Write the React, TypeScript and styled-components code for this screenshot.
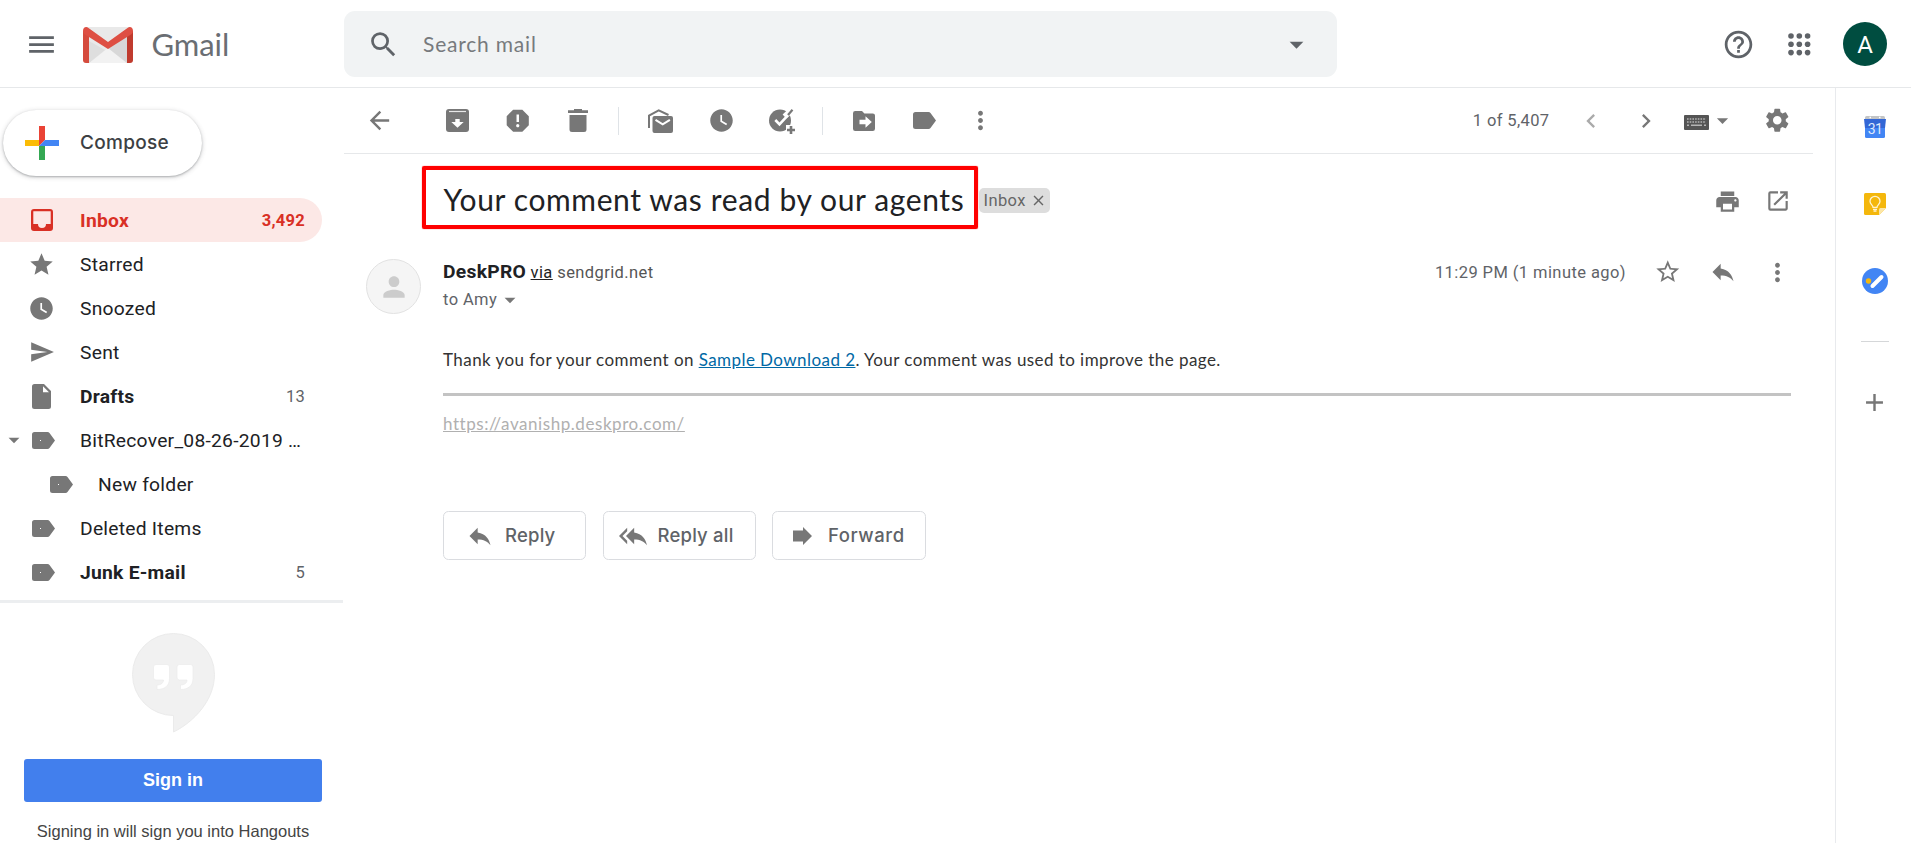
import React from "react";
import styled, { createGlobalStyle } from "styled-components";
import {
  MdMenu, MdSearch, MdArrowDropDown, MdHelpOutline, MdArrowBack, MdReport, MdWatchLater, MdChevronLeft,
  MdChevronRight, MdSettings, MdPrint, MdOpenInNew, MdStarBorder, MdStar, MdSend, MdReply, MdReplyAll,
  MdAdd, MdClose, MdPerson, MdMoreVert,
} from "react-icons/md";

const Global = createGlobalStyle`
  * { box-sizing: border-box; }
  body { margin: 0; background: #fff; font-family: Roboto, sans-serif; color: #202124; overflow: hidden; }
  svg { display: block; flex: none; }
`;

const grey = "#777";
const dark = "#5f6368";

/* ---------- frame ---------- */

const Page = styled.div`
  display: flex;
  flex-direction: column;
  width: 1911px;
  height: 843px;
`;
const Header = styled.header`
  display: flex;
  align-items: center;
  height: 88px;
  padding: 1px 24px 0 0;
  border-bottom: 1px solid #e6e8ea;
  color: ${dark};
`;
const Body = styled.div`
  display: flex;
  flex: 1;
  min-height: 0;
`;
const Slot = styled.span<{ $w: number; $tone?: string }>`
  display: flex;
  align-items: center;
  justify-content: center;
  flex: none;
  width: ${(p) => p.$w}px;
  color: ${(p) => p.$tone ?? "inherit"};
`;
const Spacer = styled.div`
  flex: 1;
`;

/* ---------- header ---------- */

const Brand = styled.div`
  display: flex;
  align-items: center;
  width: 344px;
  padding-left: 25px;
  padding-top: 1px;
`;
const BrandLogo = styled.div`
  margin: 0 18.5px 0 25px;
`;
const BrandName = styled.span`
  padding-bottom: 2px;
  font: 400 31px/40px Lato, sans-serif;
  letter-spacing: -0.06px;
  color: #6a6e73;
`;
const Search = styled.div`
  display: flex;
  align-items: center;
  width: 993px;
  height: 66px;
  padding: 0 24px 0 23px;
  border-radius: 11px;
  background: #f1f3f4;
`;
const Placeholder = styled.span`
  flex: 1;
  margin-left: 23px;
  font: 400 21px/30px Lato, sans-serif;
  letter-spacing: 0.8px;
  color: #777a7d;
`;
const Account = styled.div`
  display: flex;
  align-items: center;
  justify-content: center;
  width: 44px;
  height: 44px;
  margin-left: 13px;
  border-radius: 50%;
  background: #004d40;
  color: #fff;
  font-size: 24px;
  line-height: 44px;
  padding-top: 2px;
`;

/* ---------- sidebar ---------- */

const Sidebar = styled.aside`
  display: flex;
  flex-direction: column;
  width: 344px;
  padding-top: 22px;
`;
const Compose = styled.div`
  display: flex;
  align-items: center;
  flex: none;
  width: 199px;
  height: 66px;
  margin: 0 0 22px 3px;
  padding-left: 22px;
  border-radius: 33px;
  box-shadow: 0 1px 2px rgba(60, 64, 67, 0.32), 0 1px 4px 1px rgba(60, 64, 67, 0.16);
`;
const ComposeLabel = styled.span`
  margin-left: 21px;
  font: 500 19px/26px Inter, sans-serif;
  letter-spacing: 0.3px;
  color: #3c4043;
`;
const Nav = styled.nav`
  flex: none;
  width: 343px;
  padding-bottom: 6px;
  border-bottom: 3px solid #eceef0;
`;
const NavRow = styled.div<{ $active?: boolean; $strong?: boolean; $indent?: boolean }>`
  display: flex;
  align-items: center;
  width: 322px;
  height: 44px;
  padding: 0 17px 0 ${(p) => (p.$indent ? 18 : 0)}px;
  border-radius: 0 22px 22px 0;
  background: ${(p) => (p.$active ? "#fce8e6" : "transparent")};
  color: ${(p) => (p.$active ? "#d93025" : "#202124")};
  font-size: 19.25px;
  font-weight: ${(p) => (p.$active || p.$strong ? 700 : 400)};
  letter-spacing: 0.25px;
  white-space: nowrap;
`;
const NavLabel = styled.span`
  flex: 1;
  margin-left: 22px;
`;
const Count = styled.span<{ $active?: boolean }>`
  font-size: 16.5px;
  font-weight: ${(p) => (p.$active ? 700 : 400)};
  color: ${(p) => (p.$active ? "#d93025" : dark)};
`;
const Hangouts = styled.section`
  display: flex;
  flex-direction: column;
  align-items: center;
  width: 346px;
  padding-top: 30px;
  font-family: "Liberation Sans", sans-serif;
`;
const SignIn = styled.div`
  width: 298px;
  height: 43px;
  margin: 26px 0 17px;
  border-radius: 3px;
  background: #427fed;
  color: #fff;
  font-size: 18px;
  font-weight: 700;
  line-height: 42px;
  text-align: center;
`;
const Hint = styled.div`
  color: #444;
  font-size: 16.5px;
  line-height: 24px;
`;

/* ---------- message pane ---------- */

const Main = styled.main`
  width: 1469px;
`;
const Toolbar = styled.div`
  display: flex;
  align-items: center;
  height: 66px;
  border-bottom: 1px solid #e6e8ea;
  color: ${grey};
`;
const Rule = styled.span<{ $before: number; $after: number }>`
  width: 1px;
  height: 28px;
  margin: 0 ${(p) => p.$after}px 0 ${(p) => p.$before}px;
  background: #dfe3e7;
`;
const ActionGroup = styled.div`
  display: flex;
  align-items: center;
  margin-left: 11.5px;
`;
const Pager = styled.span`
  margin-right: 14px;
  font-size: 16.5px;
  letter-spacing: 0.37px;
  color: ${dark};
`;
const InputTools = styled.div`
  display: flex;
  align-items: center;
  margin: 0 6px 0 10.5px;
`;
const KeyboardKey = styled.span`
  padding-top: 4px;
`;
const SubjectRow = styled.div`
  display: flex;
  align-items: flex-start;
  height: 104px;
  padding: 12px 8px 0 78px;
`;
const Subject = styled.h2`
  width: 555.5px;
  height: 63px;
  margin: 0;
  padding: 3px 0 0 17.5px;
  border: 4px solid #f00;
  border-radius: 2px;
  box-shadow: 0 0 1px #f00;
  font: 400 30px/53px Lato, sans-serif;
  letter-spacing: 0.62px;
  white-space: nowrap;
`;
const Chip = styled.span`
  display: flex;
  align-items: center;
  justify-content: space-between;
  width: 71px;
  height: 25px;
  margin: 22px 0 0 1.5px;
  padding: 0 3px 0 4.5px;
  border-radius: 5px;
  background: #ddd;
  color: #666;
  font-size: 16.5px;
  letter-spacing: 0.4px;
`;
const SubjectTools = styled.div`
  display: flex;
  align-items: center;
  height: 70px;
  color: ${grey};
`;
const Message = styled.article`
  display: flex;
  padding-left: 22px;
`;
const Avatar = styled.div`
  display: flex;
  align-items: center;
  justify-content: center;
  flex: none;
  width: 55px;
  height: 55px;
  margin: 1px 22px 0 0;
  border: 1px solid #e2e2e2;
  border-radius: 50%;
  background: #f5f5f5;
  color: #ccc;
`;
const Content = styled.div`
  width: 1370px;
`;
const FromLine = styled.div`
  display: flex;
  align-items: center;
  height: 28px;
  color: ${grey};
`;
const Sender = styled.div`
  flex: 1;
  font-size: 16.5px;
  letter-spacing: 0.4px;
  line-height: 28px;
  color: #555;
`;
const SenderName = styled.strong`
  margin-right: 4.5px;
  font-size: 19.25px;
  letter-spacing: 0.28px;
  color: #202124;
`;
const Via = styled.span`
  margin-right: 4.5px;
  color: #222;
  text-decoration: underline;
`;
const Time = styled.span`
  font-size: 16.5px;
  letter-spacing: 0.42px;
  margin-right: 15px;
  color: ${dark};
`;
const ToLine = styled.div`
  display: flex;
  align-items: center;
  height: 27px;
  font-size: 16.5px;
  letter-spacing: 0.4px;
  color: ${dark};
`;
const Text = styled.p`
  margin: 35px 0 0;
  font: 400 17px/24px Lato, sans-serif;
  letter-spacing: 0.435px;
  color: #333;
`;
const TextLink = styled.a`
  color: #0068a5;
  text-decoration: underline;
`;
const Divider = styled.div`
  width: 1348px;
  height: 3px;
  margin-top: 21px;
  background: #c3c3c3;
`;
const SiteLink = styled.a`
  display: block;
  width: max-content;
  margin-top: 16px;
  font: 400 17px/24px Lato, sans-serif;
  letter-spacing: 0.56px;
  color: #b0b0b0;
  text-decoration: underline;
`;
const Buttons = styled.div`
  display: flex;
  gap: 16.5px;
  margin-top: 75px;
`;
const ReplyButton = styled.div<{ $w: number; $pad: number; $gap: number; $ls: number }>`
  display: flex;
  align-items: center;
  gap: ${(p) => p.$gap}px;
  width: ${(p) => p.$w}px;
  height: 49px;
  padding-left: ${(p) => p.$pad}px;
  border: 1px solid #dadce0;
  border-radius: 5.5px;
  font: 500 18.5px/24px Inter, sans-serif;
  letter-spacing: ${(p) => p.$ls}px;
  color: ${dark};
  svg { color: ${grey}; }
`;
const ReplyLabel = styled.span`
  padding-bottom: 2px;
`;

/* ---------- side panel ---------- */

const Panel = styled.aside`
  display: flex;
  flex-direction: column;
  align-items: center;
  width: 76px;
  margin-left: 22px;
  padding: 28px 0 0 2px;
  border-left: 1px solid #e8eaed;
  color: ${grey};
`;
const AppIcon = styled.div<{ $gap: number }>`
  margin-bottom: ${(p) => p.$gap}px;
`;
const PanelRule = styled.div`
  width: 28px;
  height: 1px;
  margin-bottom: 46px;
  background: #d5d7d9;
`;

/* ---------- drawings ---------- */

const GmailLogo = () => (
  <svg width="50" height="36" viewBox="0 0 50 36">
    <path d="M3 0h44v36H3z" fill="#e9e9e9" />
    <path d="M6 36L25 21l19 15z" fill="#f2f2f2" />
    <path d="M6 14l16 9L6 36z" fill="#dedede" />
    <path d="M25 21L44 9v27z" fill="#d8d8d8" />
    <path d="M0 3.500l6 5V36H3a3 3 0 0 1-3-3z" fill="#d54b3d" />
    <path d="M50 3.500l-6 5V36h3a3 3 0 0 0 3-3z" fill="#c03b2e" />
    <path d="M0 4C0 .5 3 -1 5.500 1L25 15 44.500 1C47 -1 50 .5 50 4c0 1.500-.8 2.600-2 3.500L25 22 2 7.500C.8 6.600 0 5.500 0 4z" fill="#de4f43" />
  </svg>
);
const AppsGrid = () => (
  <svg width="23" height="23" viewBox="0 0 23 23" fill={dark}>
    {[3, 11.3, 19.6].map((y) => [3, 11.3, 19.6].map((x) => <circle key={`${x}-${y}`} cx={x} cy={y} r="2.8" />))}
  </svg>
);
const ComposePlus = () => (
  <svg width="34" height="34" viewBox="0 0 34 34">
    <path d="M14 0h6v14l-6 6z" fill="#ea4335" />
    <path d="M0 14h14v6H0z" fill="#fbbc05" />
    <path d="M34 14H20l-6 6h20z" fill="#4285f4" />
    <path d="M14 20h6v14h-6z" fill="#34a853" />
  </svg>
);
const InboxIcon = () => (
  <svg width="22" height="22" viewBox="0 0 22 22">
    <path
      fill="currentColor"
      fillRule="evenodd"
      d="M3 0h16a3 3 0 0 1 3 3v16a3 3 0 0 1-3 3H3a3 3 0 0 1-3-3V3a3 3 0 0 1 3-3zM2.300 2.300V15H7a4 4 0 0 0 8 0h4.700V2.300z"
    />
  </svg>
);
const DraftIcon = () => (
  <svg width="19" height="25" viewBox="0 0 19 25">
    <path fill={grey} d="M2.500 0h9.500L19 7v15.500a2.500 2.500 0 0 1-2.500 2.500h-14A2.500 2.500 0 0 1 0 22.500v-20A2.500 2.500 0 0 1 2.500 0z" />
    <path fill="#fff" d="M11 2.300v6h6z" />
  </svg>
);
const TagIcon = ({ dot }: { dot?: boolean }) => (
  <svg width="23" height="17" viewBox="0 0 23 17">
    <path fill={grey} d="M2.500 0h13a2.500 2.500 0 0 1 2 1L23 8.500 17.500 16a2.500 2.500 0 0 1-2 1h-13A2.500 2.500 0 0 1 0 14.500v-12A2.500 2.500 0 0 1 2.500 0z" />
    {dot && <path fill="#fff" d="M8 8h1v1H8z" />}
  </svg>
);
const ArchiveIcon = () => (
  <svg width="23" height="23" viewBox="0 0 23 23">
    <rect width="23" height="23" rx="3" fill={grey} />
    <path d="M3 2.500h17" stroke="#e8e8e8" strokeWidth="1.200" />
    <path d="M9.300 10h4.400v3h4L11.500 18.800 5.300 13h4z" fill="#fff" />
  </svg>
);
const TrashIcon = () => (
  <svg width="20" height="23" viewBox="0 0 20 23" fill={grey}>
    <path d="M6 0h8v1.300h6V4H0V1.300h6zM1.500 6h17v14.500A2.500 2.500 0 0 1 16 23H4a2.500 2.500 0 0 1-2.500-2.500z" />
  </svg>
);
const UnreadIcon = () => (
  <svg width="25" height="24" viewBox="0 0 25 24">
    <path d="M1 19V6.500L10.700 1.300 20.500 6" fill="none" stroke={grey} strokeWidth="2" />
    <rect x="4.500" y="7" width="20.500" height="17" rx="2" fill={grey} />
    <path d="M7.500 10.800l7.200 4.600 7.200-4.600" fill="none" stroke="#fff" strokeWidth="2" />
  </svg>
);
const TaskIcon = () => (
  <svg width="27" height="26" viewBox="0 0 27 26">
    <circle cx="11" cy="12.500" r="11" fill={grey} />
    <path d="M15.500 8.500L23.500 1" fill="none" stroke="#fff" strokeWidth="5.500" />
    <path d="M18.800 7.200l4.700-5.400" fill="none" stroke={grey} strokeWidth="2.200" />
    <path d="M6.300 12l4.200 4.300L19 7.200" fill="none" stroke="#fff" strokeWidth="2.600" />
    <path d="M17 17h10v9H17z" fill="#fff" />
    <path d="M22 18v8M18 22h8" stroke={grey} strokeWidth="2.600" />
  </svg>
);
const MoveIcon = () => (
  <svg width="22" height="20" viewBox="0 0 22 20">
    <path fill={grey} d="M2.200 0H9l2.400 2.400h8.400A2.200 2.200 0 0 1 22 4.600v13.200a2.200 2.200 0 0 1-2.200 2.200H2.200A2.200 2.200 0 0 1 0 17.800V2.200A2.200 2.200 0 0 1 2.200 0z" />
    <path fill="#fff" d="M6.500 8.800h6V5.200l6.300 5.800-6.300 5.800v-3.600h-6z" />
  </svg>
);
const KeyboardIcon = () => (
  <svg width="25" height="15" viewBox="0 0 25 15">
    <rect width="25" height="15" rx="1" fill="#555" />
    <path d="M3 4h19M3 7h19" stroke="#b4b4b4" strokeWidth="1.600" strokeDasharray="1.600 1.100" />
    <path d="M3 10.300h2M20 10.300h2M7 10.300h11" stroke="#b4b4b4" strokeWidth="1.600" />
  </svg>
);
const ForwardIcon = () => (
  <svg width="19" height="18" viewBox="0 0 19 18">
    <path fill="currentColor" d="M0 3.500h10V0l9 9-9 9v-3.500H0z" />
  </svg>
);
const HangoutsLogo = () => (
  <svg width="83" height="100" viewBox="0 0 83 100">
    <path
      d="M41.500.5a41 41 0 1 0 0 82V99C62 89 82.500 67 82.500 41.500a41 41 0 0 0-41-41z"
      fill="#f1f1f1"
      stroke="#ebebeb"
    />
    <path
      fill="#fff"
      stroke="#ebebeb"
      strokeWidth=".7"
      d="M24 31.500h11a2.500 2.500 0 0 1 2.500 2.500v11.500c0 7-4.500 11-12.500 11V52c4 0 6.500-2 6.500-5H24a2.500 2.500 0 0 1-2.500-2.500V34a2.500 2.500 0 0 1 2.500-2.500zM47.500 31.500h11a2.500 2.500 0 0 1 2.500 2.500v11.500c0 7-4.500 11-12.500 11V52c4 0 6.500-2 6.500-5h-7.500a2.500 2.500 0 0 1-2.500-2.500V34a2.500 2.500 0 0 1 2.500-2.500z"
    />
  </svg>
);
const CalendarIcon = () => (
  <svg width="22" height="22" viewBox="0 0 22 22">
    <path d="M1 1.500Q1 0 2.500 0h17Q21 0 21 1.500V5H1z" fill="#c2c4c6" />
    <path d="M5.500 1.500h1.500M15 1.500h1.500" stroke="#fff" strokeWidth="1.400" />
    <path d="M0 3h22l-1 9H1z" fill="#3367d6" />
    <path d="M1 12h20v8.500q0 1.500-1.500 1.500h-17Q1 22 1 20.500z" fill="#4285f4" />
    <text x="11" y="17.800" textAnchor="middle" fontFamily="Roboto, sans-serif" fontSize="14" letterSpacing="-0.5" fill="#dfe9fc">31</text>
  </svg>
);
const KeepIcon = () => (
  <svg width="22" height="22" viewBox="0 0 22 22">
    <path d="M1.500 0h19Q22 0 22 1.500V15l-7 7H1.500Q0 22 0 20.500v-19Q0 0 1.500 0z" fill="#f4b70c" />
    <path d="M22 15l-7 7v-5.500q0-1.500 1.500-1.500z" fill="#fce6a6" />
    <path d="M9 14.300c0-2-3-3-3-6a5 5 0 0 1 10 0c0 3-3 4-3 6zM9 16.300h4M9.500 18h3" fill="none" stroke="#fff3d0" strokeWidth="1.300" />
  </svg>
);
const TasksIcon = () => (
  <svg width="26" height="26" viewBox="0 0 26 26">
    <circle cx="13" cy="13" r="13" fill="#4285f4" />
    <path d="M10.500 18L19.500 9" stroke="#fff" strokeWidth="4" strokeLinecap="round" />
    <circle cx="6.500" cy="13" r="2.700" fill="#f4b70c" />
  </svg>
);

type Item = {
  label: string;
  icon: React.ReactNode;
  shift?: boolean;
  count?: string;
  active?: boolean;
  strong?: boolean;
  indent?: boolean;
  open?: boolean;
};

const items: Item[] = [
  { label: "Inbox", icon: <InboxIcon />, count: "3,492", active: true },
  { label: "Starred", icon: <MdStar size={27} color={grey} /> },
  { label: "Snoozed", icon: <MdWatchLater size={27} color={grey} /> },
  { label: "Sent", icon: <MdSend size={26} color={grey} /> },
  { label: "Drafts", icon: <DraftIcon />, count: "13", strong: true },
  { label: "BitRecover_08-26-2019 …", icon: <TagIcon dot />, shift: true, open: true },
  { label: "New folder", icon: <TagIcon dot />, shift: true, indent: true },
  { label: "Deleted Items", icon: <TagIcon dot />, shift: true },
  { label: "Junk E-mail", icon: <TagIcon dot />, shift: true, count: "5", strong: true },
];

const NavIcon = styled.span<{ $shift?: boolean }>`
  display: flex;
  align-items: center;
  justify-content: center;
  width: 33px;
  padding-left: ${(p) => (p.$shift ? 4 : 0)}px;
`;
const Expander = styled.span`
  display: flex;
  justify-content: center;
  width: 25px;
  padding-left: 2px;
  color: ${grey};
`;

export default function App() {
  return (
    <>
      <Global />
      <Page>
        <Header>
          <Brand>
            <MdMenu size={33} />
            <BrandLogo><GmailLogo /></BrandLogo>
            <BrandName>Gmail</BrandName>
          </Brand>
          <Search>
            <MdSearch size={33} />
            <Placeholder>Search mail</Placeholder>
            <MdArrowDropDown size={33} />
          </Search>
          <Spacer />
          <Slot $w={61}><MdHelpOutline size={33} /></Slot>
          <Slot $w={61}><AppsGrid /></Slot>
          <Account>A</Account>
        </Header>

        <Body>
          <Sidebar>
            <Compose>
              <ComposePlus />
              <ComposeLabel>Compose</ComposeLabel>
            </Compose>
            <Nav>
              {items.map((it) => (
                <NavRow key={it.label} $active={it.active} $strong={it.strong} $indent={it.indent}>
                  <Expander>{it.open && <MdArrowDropDown size={26} />}</Expander>
                  <NavIcon $shift={it.shift}>{it.icon}</NavIcon>
                  <NavLabel>{it.label}</NavLabel>
                  {it.count && <Count $active={it.active}>{it.count}</Count>}
                </NavRow>
              ))}
            </Nav>
            <Hangouts>
              <HangoutsLogo />
              <SignIn>Sign in</SignIn>
              <Hint>Signing in will sign you into Hangouts</Hint>
            </Hangouts>
          </Sidebar>

          <Main>
            <Toolbar>
              <Slot $w={71}><MdArrowBack size={29} /></Slot>
              <ActionGroup>
                <Slot $w={61}><ArchiveIcon /></Slot>
                <Slot $w={61}><MdReport size={29.5} /></Slot>
                <Slot $w={59}><TrashIcon /></Slot>
                <Rule $before={10.5} $after={11} />
                <Slot $w={61}><UnreadIcon /></Slot>
                <Slot $w={60}><MdWatchLater size={27} /></Slot>
                <Slot $w={62}><TaskIcon /></Slot>
                <Rule $before={9} $after={10.5} />
                <Slot $w={60}><MoveIcon /></Slot>
                <Slot $w={62}><TagIcon /></Slot>
                <Slot $w={49}><MdMoreVert size={29} /></Slot>
              </ActionGroup>
              <Spacer />
              <Pager>1 of 5,407</Pager>
              <Slot $w={55} $tone="#aaa"><MdChevronLeft size={28} /></Slot>
              <Slot $w={55}><MdChevronRight size={28} /></Slot>
              <InputTools>
                <KeyboardKey><KeyboardIcon /></KeyboardKey>
                <Slot $w={27}><MdArrowDropDown size={27} /></Slot>
              </InputTools>
              <Slot $w={71}><MdSettings size={28.5} /></Slot>
            </Toolbar>

            <SubjectRow>
              <Subject>Your comment was read by our agents</Subject>
              <Chip>
                Inbox
                <MdClose size={17} />
              </Chip>
              <Spacer />
              <SubjectTools>
                <Slot $w={46}><MdPrint size={27} /></Slot>
                <Slot $w={55}><MdOpenInNew size={26} /></Slot>
              </SubjectTools>
            </SubjectRow>

            <Message>
              <Avatar><MdPerson size={32} /></Avatar>
              <Content>
                <FromLine>
                  <Sender>
                    <SenderName>DeskPRO</SenderName>
                    <Via>via</Via>
                    sendgrid.net
                  </Sender>
                  <Time>11:29 PM (1 minute ago)</Time>
                  <Slot $w={53}><MdStarBorder size={27.5} /></Slot>
                  <Slot $w={57}><MdReply size={28} /></Slot>
                  <Slot $w={53}><MdMoreVert size={29} /></Slot>
                  <Slot $w={9} />
                </FromLine>
                <ToLine>
                  to Amy
                  <MdArrowDropDown size={26} color={grey} />
                </ToLine>
                <Text>
                  Thank you for your comment on <TextLink>Sample Download 2</TextLink>. Your comment was used to
                  improve the page.
                </Text>
                <Divider />
                <SiteLink>https://avanishp.deskpro.com/</SiteLink>
                <Buttons>
                  <ReplyButton $w={143} $pad={22} $gap={11} $ls={0.2}>
                    <MdReply size={28} />
                    <ReplyLabel>Reply</ReplyLabel>
                  </ReplyButton>
                  <ReplyButton $w={153} $pad={15} $gap={11} $ls={0.2}>
                    <MdReplyAll size={28} />
                    <ReplyLabel>Reply all</ReplyLabel>
                  </ReplyButton>
                  <ReplyButton $w={154} $pad={20} $gap={16} $ls={0.55}>
                    <ForwardIcon />
                    <ReplyLabel>Forward</ReplyLabel>
                  </ReplyButton>
                </Buttons>
              </Content>
            </Message>
          </Main>

          <Panel>
            <AppIcon $gap={55}><CalendarIcon /></AppIcon>
            <AppIcon $gap={53}><KeepIcon /></AppIcon>
            <AppIcon $gap={47}><TasksIcon /></AppIcon>
            <PanelRule />
            <MdAdd size={29} />
          </Panel>
        </Body>
      </Page>
    </>
  );
}
